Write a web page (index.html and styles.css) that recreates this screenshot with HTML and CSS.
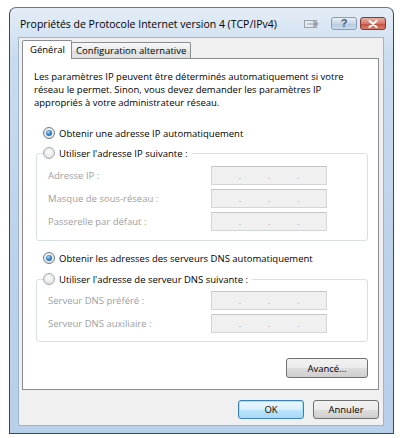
FILE: index.html
```html
<!DOCTYPE html>
<html lang="fr">
<head>
    <meta charset="UTF-8">
    <meta name="viewport" content="width=device-width, initial-scale=1.0">
    <title>Propriétés de Protocole Internet version 4 (TCP/IPv4)</title>
    <link rel="stylesheet" href="styles.css">
</head>
<body>
    <div class="window">
        <div class="titlebar">
            <span class="title">Propriétés de Protocole Internet version 4 (TCP/IPv4)</span>
            <span class="tb-icon">
                <svg width="18" height="8" viewBox="0 0 18 8">
                    <rect x="0.5" y="0.5" width="12" height="7" fill="#e6eaef" stroke="#9aa3ad"/>
                    <path d="M3 4h9M10 1.5l4 2.5-4 2.5z" fill="#9aa3ad" stroke="#9aa3ad" stroke-width="1.2"/>
                </svg>
            </span>
            <span class="tb-btn help">?</span>
            <span class="tb-btn close">
                <svg width="10" height="8" viewBox="0 0 10 8">
                    <path d="M1.5 1l7 6M8.5 1l-7 6" stroke="#fff" stroke-width="2" stroke-linecap="round"/>
                </svg>
            </span>
        </div>
        <div class="client">
            <div class="tabs">
                <span class="tab active">Général</span>
                <span class="tab">Configuration alternative</span>
            </div>
            <div class="panel">
                <p class="desc">Les paramètres IP peuvent être déterminés automatiquement si votre<br>réseau le permet. Sinon, vous devez demander les paramètres IP<br>appropriés à votre administrateur réseau.</p>

                <div class="option first"><span class="radio checked"></span>Obtenir une adresse IP automatiquement</div>
                <fieldset class="group">
                    <legend class="option"><span class="radio"></span>Utiliser l'adresse IP suivante :</legend>
                    <div class="field"><span class="label">Adresse IP :</span><span class="ipbox"><i>.</i><i>.</i><i>.</i></span></div>
                    <div class="field"><span class="label">Masque de sous-réseau :</span><span class="ipbox"><i>.</i><i>.</i><i>.</i></span></div>
                    <div class="field"><span class="label">Passerelle par défaut :</span><span class="ipbox"><i>.</i><i>.</i><i>.</i></span></div>
                </fieldset>

                <div class="option dns"><span class="radio checked"></span>Obtenir les adresses des serveurs DNS automatiquement</div>
                <fieldset class="group dns-group">
                    <legend class="option"><span class="radio"></span>Utiliser l'adresse de serveur DNS suivante :</legend>
                    <div class="field"><span class="label">Serveur DNS préféré :</span><span class="ipbox"><i>.</i><i>.</i><i>.</i></span></div>
                    <div class="field"><span class="label">Serveur DNS auxiliaire :</span><span class="ipbox"><i>.</i><i>.</i><i>.</i></span></div>
                </fieldset>

                <div class="actions">
                    <button type="button" class="btn advanced">Avancé...</button>
                </div>
            </div>
            <div class="footer">
                <button type="button" class="btn default">OK</button>
                <button type="button" class="btn">Annuler</button>
            </div>
        </div>
    </div>
</body>
</html>
```
FILE: styles.css
```css
body {
    margin: 0;
    background: #fff;
    font-family: "Open Sans", "Noto Sans", Arial, sans-serif;
    font-size: 9.5px;
    color: #000;
}
.window {
    box-sizing: border-box;
    width: 385px;
    height: 427px;
    margin: 7px 0 0 9px;
    border: 1px solid #3f4650;
    border-top-color: #6c7886;
    border-radius: 7px 7px 0 0;
    background: linear-gradient(#e4edf7, #c9dbef 12%, #bcd2ea 60%, #b8d0ea);
}
.titlebar {
    display: flex;
    align-items: center;
    height: 29px;
    padding: 2px 7px 0 10px;
    box-sizing: border-box;
}
.title {
    flex: 1;
    font-size: 10.5px;
    color: #000;
    white-space: nowrap;
}
.tb-icon {
    display: flex;
    margin-right: 9px;
}
.tb-btn {
    display: flex;
    align-items: center;
    justify-content: center;
    box-sizing: border-box;
    width: 26px;
    height: 13px;
    border-radius: 3px;
}
.help {
    margin-right: 3px;
    border: 1px solid #8a9cb2;
    background: linear-gradient(#e8f0f9, #c7d6e7 50%, #b4c8de 51%, #c9dbee);
    color: #4a5a70;
    font-family: "Liberation Sans", Arial, sans-serif;
    font-size: 11px;
    font-weight: bold;
    line-height: 1;
}
.close {
    border: 1px solid #7d3a30;
    background: linear-gradient(#eab2a5, #d47868 50%, #c24d3a 51%, #d5806d);
}
.client {
    box-sizing: border-box;
    width: 366px;
    height: 389px;
    margin-left: 8px;
    border: 1px solid #9fb3c9;
    background: #f0f0f0;
    padding: 2px 4px 0 3px;
}
.tabs {
    display: flex;
    align-items: flex-end;
    height: 18px;
}
.tab {
    box-sizing: border-box;
    height: 16px;
    padding: 0 4px 0 4px;
    border: 1px solid #898c95;
    border-bottom: none;
    border-radius: 2px 2px 0 0;
    background: linear-gradient(#f7f7f7, #ebebeb 50%, #dedede 51%, #e3e3e3);
    line-height: 15px;
    white-space: nowrap;
    margin-left: -1px;
}
.tab.active {
    position: relative;
    z-index: 1;
    height: 19px;
    width: 50px;
    margin: 0 0 -1px 0;
    padding-left: 7px;
    background: #fff;
    line-height: 17px;
}
.panel {
    box-sizing: border-box;
    width: 357px;
    height: 332px;
    border: 1px solid #898c95;
    background: #fff;
    padding: 0 11px;
}
.desc {
    margin: 11px 0 0;
    line-height: 13px;
    white-space: nowrap;
}
.option {
    display: flex;
    align-items: center;
    height: 16px;
    gap: 4px;
    white-space: nowrap;
}
.option.first {
    margin: 16px 0 0 9px;
}
.option.dns {
    margin: 9px 0 0 9px;
}
.radio {
    display: flex;
    align-items: center;
    justify-content: center;
    box-sizing: border-box;
    width: 12px;
    height: 12px;
    border: 1px solid #a3aab2;
    border-radius: 50%;
    background: radial-gradient(circle at 50% 40%, #ffffff, #e9e9e9 55%, #d6d6d6);
}
.radio.checked {
    border-color: #6f7d8c;
}
.radio.checked::after {
    content: "";
    width: 6px;
    height: 6px;
    border-radius: 50%;
    background: radial-gradient(circle at 40% 35%, #a9e1fb, #3a86c6 45%, #1a4f86);
}
.group {
    box-sizing: border-box;
    width: 332px;
    margin: 4px 0 0 2px;
    padding: 5px 0 9px 6px;
    border: 1px solid #d8dfe5;
    border-radius: 3px;
}
.group legend {
    padding: 0 4px 0 0;
}
.dns-group {
    margin-top: 5px;
    padding-top: 4px;
    padding-bottom: 8px;
}
.field {
    display: flex;
    align-items: center;
    height: 19px;
    margin: 0 0 4px 5px;
}
.field:last-child {
    margin-bottom: 0;
}
.label {
    width: 163px;
    color: #a0a0a0;
    white-space: nowrap;
}
.ipbox {
    box-sizing: border-box;
    display: flex;
    justify-content: space-evenly;
    align-items: center;
    width: 116px;
    height: 19px;
    border: 1px solid #d5d5d5;
    border-top-color: #c6c6c6;
    background: #f0f0f0;
    color: #a8a8a8;
    font-size: 9px;
}
.ipbox i {
    font-style: normal;
}
.actions {
    display: flex;
    justify-content: flex-end;
    width: 332px;
    margin: 16px 0 0 2px;
}
.btn {
    box-sizing: border-box;
    height: 20px;
    padding: 0;
    border: 1px solid #707070;
    border-radius: 3px;
    background: linear-gradient(#f2f2f2, #ebebeb 50%, #dddddd 51%, #cfcfcf);
    font-family: inherit;
    font-size: 9.5px;
    color: #000;
}
.advanced {
    width: 82px;
}
.footer {
    display: flex;
    justify-content: flex-end;
    gap: 9px;
    margin: 10px 0 0;
    padding-right: 0;
}
.footer .btn {
    width: 66px;
    height: 19px;
}
.btn.default {
    border-color: #3c7fb1;
    background: linear-gradient(#eaf6fd, #d9f0fc 50%, #bee6fd 51%, #a7d9f5);
    box-shadow: inset 0 0 0 1px #9fe3fb;
}
```
